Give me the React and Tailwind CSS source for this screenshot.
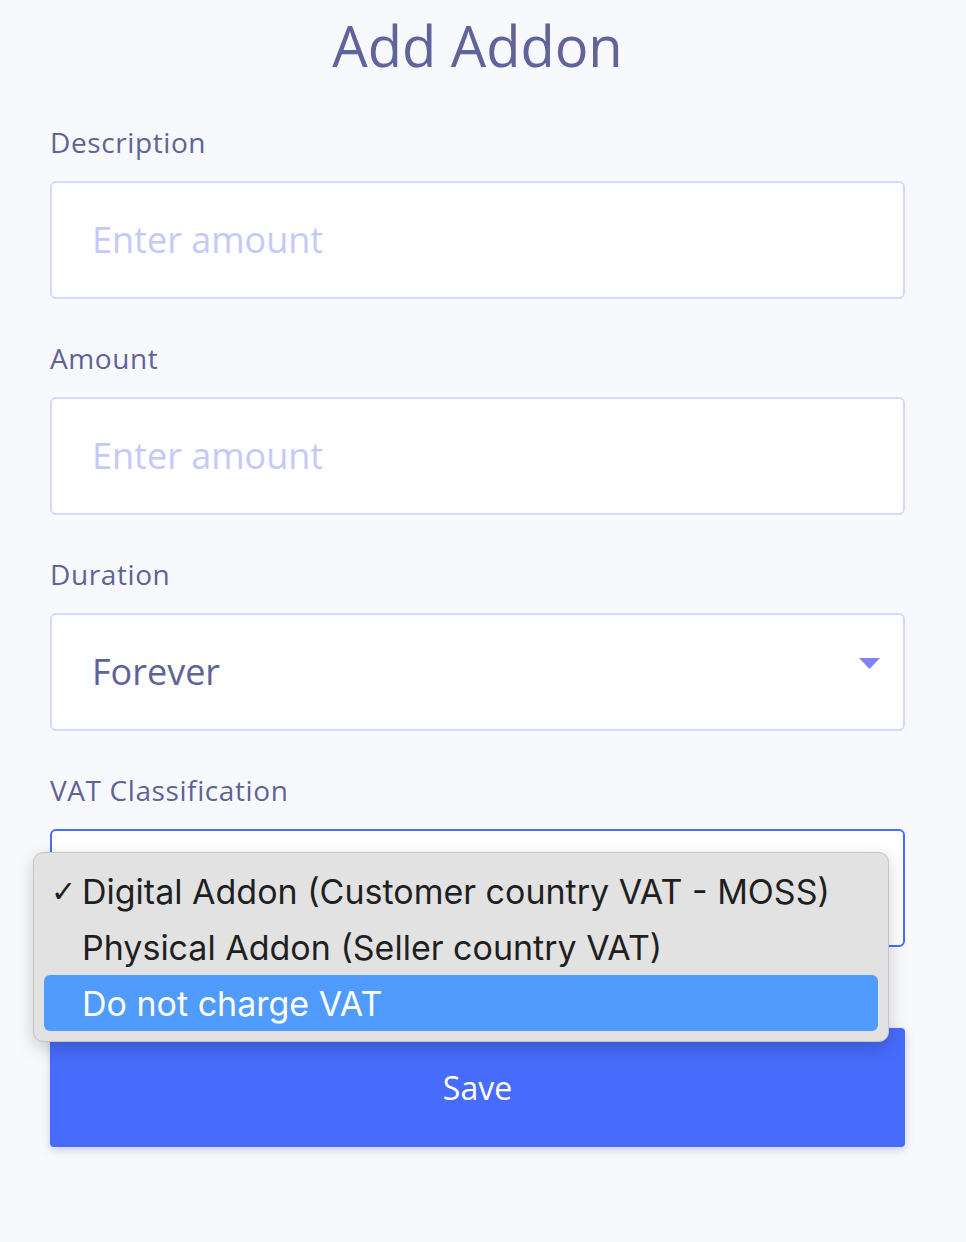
export default function App() {
  const fields = [
    { label: "Description", placeholder: "Enter amount" },
    { label: "Amount", placeholder: "Enter amount" },
  ];

  return (
    <div
      className="min-h-screen w-full bg-[#f8f9fc] pt-[5px]"
      style={{ fontFamily: '"Open Sans", "Noto Sans", sans-serif' }}
    >
      <div className="ml-[50px] w-[855px]">
        <h1 className="h-[80px] text-center text-[56px] leading-[80px] text-[#61649a]">
          Add Addon
        </h1>

        <div className="mt-[37px] flex flex-col gap-[39px]">
          {fields.map((f) => (
            <div key={f.label}>
              <div className="mb-[19px] h-[40px] text-[28px] leading-[40px] tracking-[0.6px] text-[#5f6397]">
                {f.label}
              </div>
              <div className="flex h-[118px] items-center rounded-[6px] border-2 border-[#d6d9fb] bg-white pl-[40px]">
                <span className="text-[36px] text-[#c5c8fb]">{f.placeholder}</span>
              </div>
            </div>
          ))}

          <div>
            <div className="mb-[19px] h-[40px] text-[28px] leading-[40px] tracking-[0.6px] text-[#5f6397]">
              Duration
            </div>
            <div className="flex h-[118px] items-center justify-between rounded-[6px] border-2 border-[#d6d9fb] bg-white pl-[40px] pr-[23px]">
              <span className="text-[36px] text-[#5f6397]">Forever</span>
              <svg width="21" height="11" viewBox="0 0 21 11" className="mb-[18px]">
                <path d="M0 0 H21 L10.5 11 Z" fill="#8083f8" />
              </svg>
            </div>
          </div>

          <div>
            <div className="mb-[19px] h-[40px] text-[28px] leading-[40px] tracking-[0.6px] text-[#5f6397]">
              VAT Classification
            </div>
            <div className="relative h-[118px] rounded-[6px] border-2 border-[#4a6cf7] bg-white">
              <div
                className="absolute left-[-19px] top-[21px] z-10 w-[856px] rounded-[10px] border border-[#c4c4c4] bg-[#e2e2e2] p-[10px] shadow-[0_6px_18px_rgba(0,0,0,0.18)]"
                style={{ fontFamily: 'Inter, "Liberation Sans", sans-serif' }}
              >
                {[
                  { t: "Digital Addon (Customer country VAT - MOSS)", checked: true },
                  { t: "Physical Addon (Seller country VAT)" },
                  { t: "Do not charge VAT", active: true },
                ].map((o) => (
                  <div
                    key={o.t}
                    className={
                      "relative flex h-[56px] items-center rounded-[6px] pl-[38px] text-[34px] " +
                      (o.active ? "bg-[#4f9bfe] text-white" : "text-[#1f1f1f]")
                    }
                  >
                    {o.checked && (
                      <span
                        className="absolute left-[7px] text-[30px] font-bold"
                        style={{ fontFamily: '"DejaVu Sans", sans-serif' }}
                      >
                        ✓
                      </span>
                    )}
                    {o.t}
                  </div>
                ))}
              </div>
            </div>
          </div>
        </div>

        <button className="mt-[81px] flex h-[119px] w-full items-center justify-center rounded-[4px] bg-[#476bfb] text-[32px] text-white shadow-[0_3px_8px_rgba(60,80,200,0.25)]">
          Save
        </button>
      </div>
    </div>
  );
}
